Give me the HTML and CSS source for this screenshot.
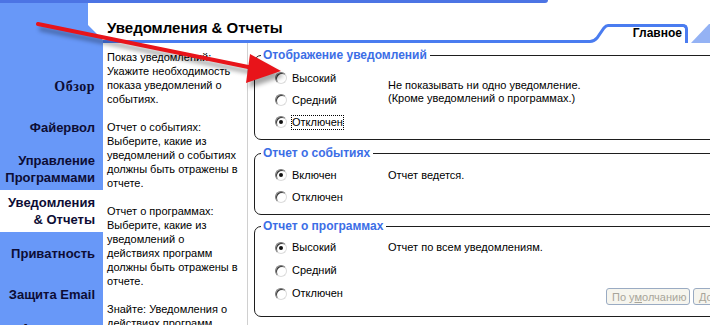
FILE: index.html
```html
<!DOCTYPE html>
<html lang="ru">
<head>
    <meta charset="UTF-8">
    <meta name="viewport" content="width=device-width, initial-scale=1.0">
    <title>Уведомления &amp; Отчеты</title>
    <link rel="stylesheet" href="styles.css">
</head>
<body>
    <div class="top-band"></div>

    <div class="app">
        <nav class="sidebar">
            <div class="nav-item nav-h41 nav-serif">Обзор</div>
            <div class="nav-item nav-h41">Файервол</div>
            <div class="nav-item nav-h42">Управление<br>Программами</div>
            <div class="nav-item nav-h42 active">Уведомления<br>&amp; Отчеты</div>
            <div class="nav-item nav-h42">Приватность</div>
            <div class="nav-item nav-h40">Защита Email</div>
            <div class="nav-item nav-h28">Антишпион</div>
        </nav>

        <main class="main">
            <header class="header">
                <h1 class="title">Уведомления &amp; Отчеты</h1>
                <svg class="tab-slant" width="18" height="19" viewBox="0 0 18 19">
                    <path d="M0 17.5 Q4 17.5 7 14 L14 4 Q16 1.5 18 1.5" fill="none" stroke="#4a7cf0" stroke-width="3"/>
                </svg>
                <div class="tab">Главное</div>
                <svg class="tab-next" width="22" height="19" viewBox="0 0 22 19">
                    <polygon points="3,19 21,0 22,0 22,19" fill="#94b2f4"/>
                </svg>
            </header>

            <div class="content">
                <div class="desc">
                    <p>Показ уведомлений:<br>Укажите необходимость<br>показа уведомлений о<br>событиях.</p>
                    <p>Отчет о событиях:<br>Выберите, какие из<br>уведомлений о событиях<br>должны быть отражены в<br>отчете.</p>
                    <p>Отчет о программах:<br>Выберите, какие из<br>уведомлений о<br>действиях программ<br>должны быть отражены в<br>отчете.</p>
                    <p>Знайте: Уведомления о<br>действиях программ</p>
                </div>

                <div class="groups">
                    <fieldset class="group group-alerts">
                        <legend>Отображение уведомлений</legend>
                        <div class="group-body">
                            <div class="opt"><span class="radio"></span><span class="label">Высокий</span></div>
                            <div class="note note-span">Не показывать ни одно уведомление.<br>(Кроме уведомлений о программах.)</div>
                            <div class="opt"><span class="radio"></span><span class="label">Средний</span></div>
                            <div class="opt"><span class="radio checked"></span><span class="label focus">Отключен</span></div>
                        </div>
                    </fieldset>

                    <fieldset class="group group-events">
                        <legend>Отчет о событиях</legend>
                        <div class="group-body">
                            <div class="opt"><span class="radio checked"></span><span class="label">Включен</span></div>
                            <div class="note">Отчет ведется.</div>
                            <div class="opt"><span class="radio"></span><span class="label">Отключен</span></div>
                        </div>
                    </fieldset>

                    <fieldset class="group group-programs">
                        <legend>Отчет о программах</legend>
                        <div class="group-body rows-23">
                            <div class="opt"><span class="radio checked"></span><span class="label">Высокий</span></div>
                            <div class="note">Отчет по всем уведомлениям.</div>
                            <div class="opt"><span class="radio"></span><span class="label">Средний</span></div>
                            <div class="opt"><span class="radio"></span><span class="label">Отключен</span></div>
                            <div class="note"></div>
                            <div class="actions">
                                <button class="btn" disabled>По у<u>м</u>олчанию</button>
                                <button class="btn" disabled>Дополнительно</button>
                            </div>
                        </div>
                    </fieldset>
                </div>
            </div>
        </main>
    </div>

    <!-- стрелка поверх окна -->
    <svg class="arrow" width="710" height="325" viewBox="0 0 710 325">
        <line x1="38" y1="24" x2="258" y2="69" stroke="#e8141a" stroke-width="4" stroke-linecap="round"/>
        <polygon points="281,71 250,54 246,83" fill="#e8141a"/>
    </svg>
</body>
</html>
```

FILE: styles.css
```css
:root {
    --band-color: #4c74e4;      /* верхняя полоса */
    --nav-color: #6898f8;       /* левое меню */
    --line-color: #4a7cf0;      /* линия заголовка */
    --legend-color: #3c6ee6;    /* заголовки групп */
    --nav-text: #0d0d35;
}

* {
    box-sizing: border-box;
    margin: 0;
    padding: 0;
}

body {
    width: 710px;
    height: 325px;
    overflow: hidden;
    position: relative;
    background-color: #fff;
    color: #000;
    font-family: "Liberation Sans", Arial, sans-serif;
    font-size: 11px;
}

.top-band {
    width: 548px;
    height: 3px;
    background-color: var(--band-color);
    border-bottom-right-radius: 4px;
}

.app {
    display: flex;
    width: 710px;
    height: 322px;
}

/* Левое меню */

.sidebar {
    width: 103px;
    flex-shrink: 0;
    padding-top: 63px;
    background-color: var(--nav-color);
    clip-path: polygon(0 0, 88px 0, 88px 22px, 103px 37px, 103px 100%, 0 100%);
}

.nav-item {
    display: flex;
    flex-direction: column;
    justify-content: center;
    padding-right: 8px;
    text-align: right;
    font-weight: bold;
    font-size: 13px;
    line-height: 17px;
    color: var(--nav-text);
}

.nav-serif {
    font-family: "Liberation Serif", "Times New Roman", serif;
    font-size: 14px;
    letter-spacing: 0.5px;
}

.nav-h40 { height: 40px; }
.nav-h41 { height: 41px; }
.nav-h42 { height: 42px; }
.nav-h28 { height: 28px; }

.nav-item.active {
    background-color: #fff;
}

/* Основная часть */

.main {
    flex: 1;
    min-width: 0;
    display: flex;
    flex-direction: column;
}

.header {
    display: flex;
    align-items: flex-end;
    height: 40px;
}

.title {
    flex: 1;
    min-width: 0;
    height: 40px;
    padding: 16px 0 0 4px;
    border-bottom: 3px solid var(--line-color);
    font-size: 15px;
    line-height: 18px;
}

.tab-slant,
.tab-next {
    display: block;
    flex-shrink: 0;
}

.tab {
    flex-shrink: 0;
    width: 80px;
    height: 19px;
    padding-right: 3px;
    border-top: 3px solid var(--line-color);
    border-right: 3px solid var(--line-color);
    border-top-right-radius: 5px;
    text-align: right;
    font-weight: bold;
    font-size: 12px;
    line-height: 13px;
}

.content {
    flex: 1;
    min-width: 0;
    display: flex;
}

.desc {
    width: 145px;
    flex-shrink: 0;
    padding: 7px 0 0 4px;
    border-right: 1px solid #d0d0d0;
    line-height: 14px;
    white-space: nowrap;
}

.desc p {
    margin-bottom: 14px;
}

.groups {
    flex: 1;
    min-width: 0;
    padding: 5px 0 0 6px;
}

/* Группы */

.group {
    min-width: 0;
    margin-right: -40px;
    padding: 0 0 0 6px;
    border: 1px solid #1e1e1e;
    border-radius: 7px;
}

.group legend {
    padding: 0 3px 0 2px;
    color: var(--legend-color);
    font-weight: bold;
    font-size: 12px;
    line-height: 14px;
}

.group-events { margin-top: 6px; }
.group-programs { margin-top: 4px; }

.group-body {
    display: grid;
    grid-template-columns: 113px 218px 1fr;
    grid-auto-rows: 22px;
    align-items: center;
    padding: 5px 0 6px 14px;
}

.group-events .group-body {
    padding: 4px 0 6px 14px;
}

.group-body.rows-23 {
    grid-auto-rows: 23px;
    padding: 3px 0 11px 14px;
}

.opt {
    grid-column: 1;
    display: flex;
    align-items: center;
}

.note {
    grid-column: 2;
    line-height: 13px;
}

.note-span {
    grid-row: 1 / span 2;
    padding-top: 5px;
}

.radio {
    position: relative;
    width: 12px;
    height: 12px;
    margin-right: 4px;
    border-radius: 50%;
    border: 1px solid;
    border-color: #7a7a7a #dcdcdc #dcdcdc #7a7a7a;
    box-shadow: inset 1px 1px 0 #3a3a3a;
    background-color: #fff;
}

.radio.checked::after {
    content: "";
    position: absolute;
    left: 3px;
    top: 3px;
    width: 4px;
    height: 4px;
    border-radius: 50%;
    background-color: #111;
}

.label {
    padding: 1px 1px;
    line-height: 13px;
}

.label.focus {
    outline: 1px dotted #000;
    outline-offset: -1px;
}

.actions {
    grid-column: 3;
    display: flex;
    gap: 3px;
    align-self: end;
}

.btn {
    flex-shrink: 0;
    height: 17px;
    padding: 0 5px;
    border: 1px solid #9aabc3;
    border-radius: 3px;
    background-color: #f6f5ee;
    color: #a8a59a;
    font-family: "Liberation Sans", Arial, sans-serif;
    font-size: 11px;
    white-space: nowrap;
}

.btn:first-child {
    width: 84px;
}

.arrow {
    position: absolute;
    left: 0;
    top: 0;
    pointer-events: none;
    filter: drop-shadow(3px 5px 2px rgba(0, 0, 0, 0.35));
}
```
